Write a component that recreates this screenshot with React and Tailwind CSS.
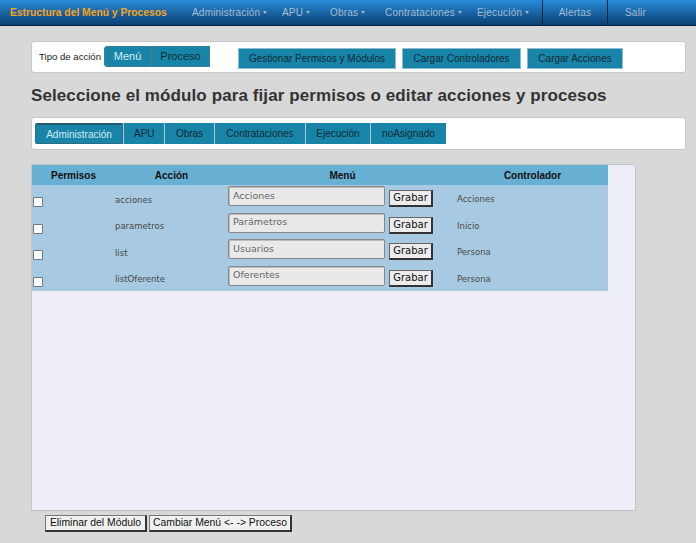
import React from 'react';

const modules = ['Administración', 'APU', 'Obras', 'Contrataciones', 'Ejecución', 'noAsignado'];
const rows = [
  { accion: 'acciones', menu: 'Acciones', ctrl: 'Acciones' },
  { accion: 'parametros', menu: 'Parámetros', ctrl: 'Inicio' },
  { accion: 'list', menu: 'Usuarios', ctrl: 'Persona' },
  { accion: 'listOferente', menu: 'Oferentes', ctrl: 'Persona' },
];

const Caret = () => <span className="ml-[3px] inline-block border-x-[2px] border-t-[3px] border-x-transparent border-t-[#9fb7cc] align-middle" />;

const App = () => (
  <div className="w-[696px] h-[543px] bg-[#d8d8d8] font-['Liberation_Sans',Arial,sans-serif] text-[#333] overflow-hidden">
    <nav className="h-[26px] flex items-stretch bg-gradient-to-b from-[#2b8ddc] to-[#0a3f70] border-b border-[#0a2a45]">
      <div className="pl-[10px] w-[192px] flex items-center text-[10.3px] font-bold text-[#f7a21a]">Estructura del Menú y Procesos</div>
      <ul className="flex items-stretch text-[10px] text-[#a3bdd4] tracking-[0.2px]">
        <li className="flex items-center w-[90px]">Administración<Caret /></li>
        <li className="flex items-center w-[48px]">APU<Caret /></li>
        <li className="flex items-center w-[55px]">Obras<Caret /></li>
        <li className="flex items-center w-[92px]">Contrataciones<Caret /></li>
        <li className="flex items-center w-[65px]">Ejecución<Caret /></li>
        <li className="flex items-center justify-center w-[66px] border-x border-[#0b2740]">Alertas</li>
        <li className="flex items-center pl-[17px]">Salir</li>
      </ul>
    </nav>

    <div className="pl-[31px] pr-[10px]">
      <div className="mt-[15px] h-[32px] bg-white border border-[#c8c8c8] rounded-[3px] flex items-center pl-[7px]">
        <span className="text-[9.6px] text-[#222]">Tipo de acción</span>
        <div className="ml-[3px] flex h-[21px] mt-[-1px]">
          <button className="w-[47px] bg-[#1784a8] text-[#d6ecf4] text-[11px] border border-[#3a7f99] rounded-l-[3px]">Menú</button>
          <button className="w-[59px] bg-[#1784a8] text-[#0e2a36] text-[11px] border border-[#3a7f99]">Proceso</button>
        </div>
        <div className="ml-[28px] flex gap-[6px] h-[21px] mt-[2px]">
          <button className="w-[158px] bg-[#1784a8] text-[#0e2a36] text-[10px] border border-[#8cbcd0]">Gestionar Permisos y Módulos</button>
          <button className="w-[119px] bg-[#1784a8] text-[#0e2a36] text-[10px] border border-[#8cbcd0]">Cargar Controladores</button>
          <button className="w-[96px] bg-[#1784a8] text-[#0e2a36] text-[10px] border border-[#8cbcd0]">Cargar Acciones</button>
        </div>
      </div>

      <h1 className="mt-[11px] text-[17px] leading-[24px] font-bold text-[#333] tracking-[0.1px]">Seleccione el módulo para fijar permisos o editar acciones y procesos</h1>

      <div className="mt-[9px] h-[33px] bg-white border border-[#c8c8c8] rounded-[3px] flex items-center pl-[3px]">
        <div className="flex h-[21px]">
          {modules.map((m, i) => (
            <button
              key={m}
              className={
                i === 0
                  ? 'px-[10px] bg-[#1784a8] text-[#d6ecf4] text-[10px] border-t-[2px] border-x border-b border-[#2c6c85] border-t-[#235a70] rounded-l-[2px]'
                  : 'px-[10px] bg-[#1784a8] text-[#0e2a36] text-[10px] border-l border-[#a8ccd8]'
              }
              style={{ width: [88, 41, 50, 91, 65, 76][i] }}
            >
              {m}
            </button>
          ))}
        </div>
      </div>

      <div className="mt-[14px] w-[605px] h-[347px] bg-[#eeeef8] border border-[#c4c4c8] rounded-tr-[3px] overflow-hidden">
        <table className="w-[576px] border-collapse text-[9px]">
          <thead>
            <tr className="h-[20px] bg-[#68afd4] text-[#111] font-bold text-[10px]">
              <th className="w-[83px] font-bold">Permisos</th>
              <th className="w-[113px] font-bold">Acción</th>
              <th className="w-[229px] font-bold">Menú</th>
              <th className="w-[151px] font-bold">Controlador</th>
            </tr>
          </thead>
          <tbody className="bg-[#a7c9e1]">
            {rows.map((r) => (
              <tr key={r.accion} className="h-[26.5px]">
                <td className="align-middle">
                  <span className="block ml-[1px] mt-[8px] w-[10px] h-[10px] bg-white border border-[#777] rounded-[1px]" />
                </td>
                <td className="pt-[4px] text-[#4a4a4a] font-['DejaVu_Sans',sans-serif] text-[8.5px]">{r.accion}</td>
                <td className="align-top">
                  <div className="flex items-start">
                    <div className="mt-[1px] w-[157px] h-[20px] bg-[#e9e9e9] border border-[#888] rounded-[2px] pl-[4px] flex items-center text-[#666] text-[9.5px] font-['DejaVu_Sans',sans-serif] shadow-[inset_1px_1px_0_#bbb]">{r.menu}</div>
                    <button className="ml-[4px] mt-[5px] w-[44px] h-[17px] bg-[#ececec] border border-[#666] border-r-[2px] border-b-[2px] border-r-[#333] border-b-[#333] text-[#111] text-[10px] font-['DejaVu_Sans',sans-serif] leading-none">Grabar</button>
                  </div>
                </td>
                <td className="pt-[3px] text-[#4a4a4a] font-['DejaVu_Sans',sans-serif] text-[8.5px]">{r.ctrl}</td>
              </tr>
            ))}
          </tbody>
        </table>
      </div>

      <div className="mt-[4px] ml-[14px] flex gap-[2px]">
        <button className="h-[17px] w-[102px] bg-[#f0f0f0] border border-[#777] border-r-[2px] border-b-[2px] border-r-[#333] border-b-[#333] text-[10.4px] text-[#111] leading-none whitespace-nowrap">Eliminar del Módulo</button>
        <button className="h-[17px] w-[143px] bg-[#f0f0f0] border border-[#777] border-r-[2px] border-b-[2px] border-r-[#333] border-b-[#333] text-[10.4px] text-[#111] leading-none whitespace-nowrap">Cambiar Menú &lt;- -&gt; Proceso</button>
      </div>
    </div>
  </div>
);

export default App;
